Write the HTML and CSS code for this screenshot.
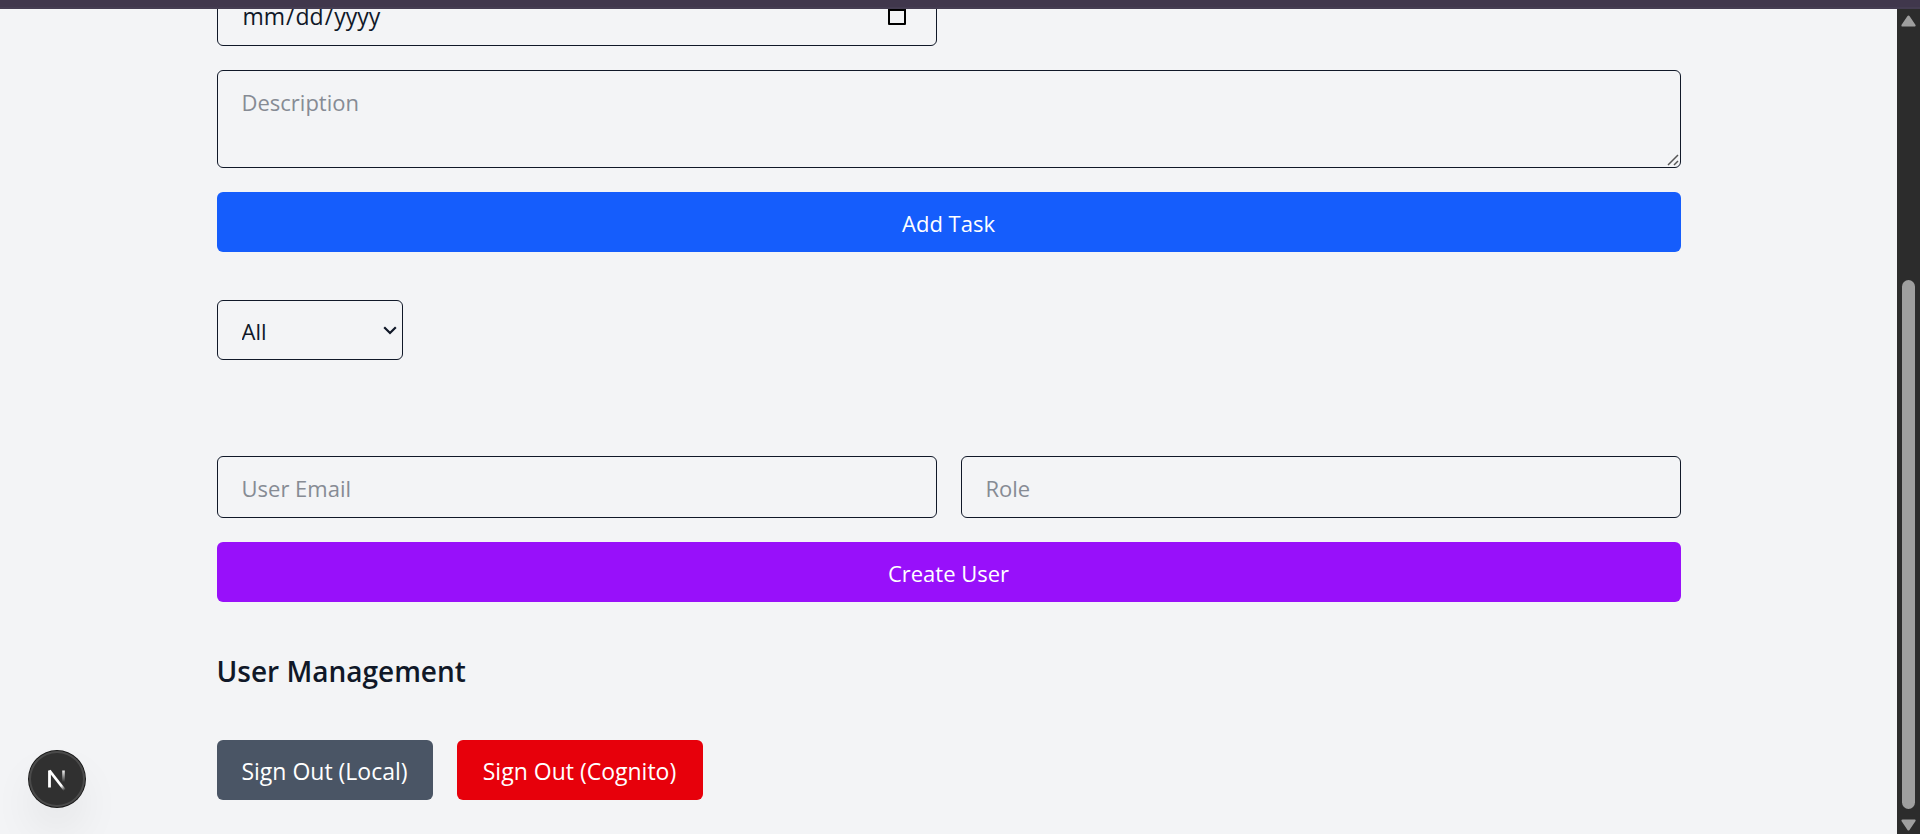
FILE: index.html
```html
<!DOCTYPE html>
<html lang="en">
<head>
<meta charset="utf-8">
<meta name="viewport" content="width=device-width, initial-scale=1">
<title>Task Manager</title>
<link rel="stylesheet" href="styles.css">
</head>
<body>
<div class="window">
  <div class="window-edge"></div>
  <div class="viewport">
    <div class="page">
      <main class="container">
        <form class="form-grid">
          <div class="date-field">
            <input class="field" type="date" aria-label="Due date">
            <svg class="date-icon" width="20" height="22" viewBox="0 0 20 22" aria-hidden="true"><path d="M2 5h16v15H2z" fill="none" stroke="#000" stroke-width="2" stroke-linejoin="round"/><path d="M1 4h18v3H1z"/></svg>
          </div>
          <div class="textarea-field">
            <textarea class="field" placeholder="Description" aria-label="Description" rows="2"></textarea>
            <svg class="grip" width="12" height="12" viewBox="0 0 12 12" aria-hidden="true"><path d="M1 11 11 1M7 11l4-4" fill="none" stroke="#555" stroke-width="1.5"/></svg>
          </div>
          <button class="button button-blue wide" type="button">Add Task</button>
        </form>
        <div class="filter">
          <select class="field" aria-label="Filter tasks">
            <option>All</option>
            <option>Pending</option>
            <option>Completed</option>
          </select>
          <svg class="chevron" width="14" height="9" viewBox="0 0 14 9" aria-hidden="true"><path d="m1.2 1.2 5.8 5.8 5.8-5.8" fill="none" stroke="#101828" stroke-width="2.2"/></svg>
        </div>
        <div class="task-list"></div>
        <form class="form-grid">
          <input class="field" type="email" placeholder="User Email" aria-label="User Email">
          <input class="field" type="text" placeholder="Role" aria-label="Role">
          <button class="button button-purple wide" type="button">Create User</button>
        </form>
        <h2 class="heading">User Management</h2>
        <div class="actions">
          <button class="button button-slate" type="button">Sign Out (Local)</button>
          <button class="button button-red" type="button">Sign Out (Cognito)</button>
        </div>
      </main>
      <button class="dev-badge" type="button" aria-label="Open Next.js Dev Tools">
        <svg width="20" height="26" viewBox="0 0 20 26" fill="none" aria-hidden="true">
          <defs>
            <linearGradient id="diag" x1="11" y1="15" x2="18" y2="24" gradientUnits="userSpaceOnUse"><stop stop-color="#fff"/><stop offset=".5" stop-color="#fff"/><stop offset="1" stop-color="#fff" stop-opacity="0"/></linearGradient>
            <linearGradient id="stem" x1="16" y1="4" x2="16" y2="16" gradientUnits="userSpaceOnUse"><stop stop-color="#fff"/><stop offset="1" stop-color="#fff" stop-opacity="0"/></linearGradient>
          </defs>
          <path d="M2.5 21.5V4.5" stroke="#fff" stroke-width="2.8"/>
          <path d="M2.4 4.5 18 24.5" stroke="url(#diag)" stroke-width="2.8"/>
          <path d="M16.5 4.5v12" stroke="url(#stem)" stroke-width="2.6"/>
        </svg>
      </button>
    </div>
    <div class="scrollbar" aria-hidden="true">
      <svg width="15" height="12" viewBox="0 0 15 12"><path d="M7.5 1.8 13.4 10.4H1.6z" fill="#9f9f9f" stroke="#9f9f9f" stroke-width="2.4" stroke-linejoin="round"/></svg>
      <div class="track"><div class="thumb"></div></div>
      <svg width="15" height="12" viewBox="0 0 15 12"><path d="M7.5 10.2 13.4 1.6H1.6z" fill="#9f9f9f" stroke="#9f9f9f" stroke-width="2.4" stroke-linejoin="round"/></svg>
    </div>
  </div>
</div>
</body>
</html>
```
FILE: styles.css
```css
*,
*::before,
*::after {
  box-sizing: border-box;
}

body {
  margin: 0;
  background: #f3f4f6;
  color: #101828;
  font: 22px/36px "Segoe UI", "Open Sans", "Noto Sans", sans-serif;
}

.window {
  display: flex;
  flex-direction: column;
  height: 100vh;
}

.window-edge {
  flex: none;
  height: 9px;
  background: #40374c;
  border-bottom: 2px solid #453d52;
}

.viewport {
  flex: 1;
  display: flex;
  min-height: 0;
}

/* Content rests at the end of its scroll range */
.page {
  position: relative;
  flex: 1;
  display: flex;
  flex-direction: column;
  justify-content: flex-end;
  min-width: 0;
  overflow: hidden;
}

.container {
  width: 100%;
  max-width: 1536px;
  margin: 0 auto;
  padding: 0 36px 34px;
}

.form-grid {
  display: grid;
  grid-template-columns: 1fr 1fr;
  gap: 24px;
  margin-bottom: 48px;
}

.wide,
.textarea-field {
  grid-column: 1 / -1;
}

.field {
  display: block;
  width: 100%;
  margin: 0;
  padding: 13px 24px 11px;
  border: 1px solid #101828;
  border-radius: 6px;
  background: transparent;
  color: inherit;
  font: inherit;
}

input.field {
  height: 62px;
}

.field::placeholder {
  color: #868b94;
  opacity: 1;
}

.date-field,
.textarea-field,
.filter {
  position: relative;
}

.date-field .field {
  font-size: 23px;
}

.field::-webkit-calendar-picker-indicator {
  opacity: 0;
}

.date-icon {
  position: absolute;
  right: 30px;
  bottom: 20px;
  pointer-events: none;
}

textarea.field {
  height: 98px;
  resize: none;
}

.grip {
  position: absolute;
  right: 2px;
  bottom: 2px;
}

.filter {
  width: 186px;
  margin-bottom: 48px;
}

select.field {
  height: 60px;
  padding: 1px 24px 0;
  appearance: none;
}

.chevron {
  position: absolute;
  right: 6px;
  top: 26px;
  pointer-events: none;
}

.task-list {
  margin-bottom: 96px;
}

.button {
  padding: 13px 24px 11px;
  border: 0;
  border-radius: 6px;
  color: #fff;
  font: inherit;
}

.button-blue {
  background: #155dfc;
}

.button-purple {
  background: #9810fa;
}

.button-slate {
  min-width: 216px;
  background: #4a5565;
}

.button-red {
  min-width: 246px;
  background: #e7000b;
}

.heading {
  margin: 0 0 48px;
  padding-top: 1px;
  font-size: 28px;
  font-weight: 600;
  line-height: 41px;
}

.actions {
  display: flex;
  gap: 24px;
}

.actions .button {
  padding-right: 20px;
  padding-left: 20px;
  font-size: 23px;
}

.dev-badge {
  position: absolute;
  left: 29px;
  bottom: 27px;
  display: grid;
  place-items: center;
  width: 56px;
  height: 56px;
  padding: 0;
  border: 0;
  border-radius: 50%;
  background: #303030;
  box-shadow: 0 0 0 1px #171717, inset 0 0 0 2px #4a4a4a, 0 24px 48px -8px rgba(0, 0, 0, 0.12);
}

.scrollbar {
  flex: none;
  display: flex;
  flex-direction: column;
  align-items: center;
  width: 23px;
  padding: 6px 0 3px;
  background: #2c2c2c;
}

.track {
  flex: 1;
  display: flex;
  flex-direction: column;
  justify-content: flex-end;
  width: 13px;
  padding-bottom: 10px;
}

.thumb {
  height: 67.6%;
  border-radius: 7px;
  background: #9f9f9f;
}
```
